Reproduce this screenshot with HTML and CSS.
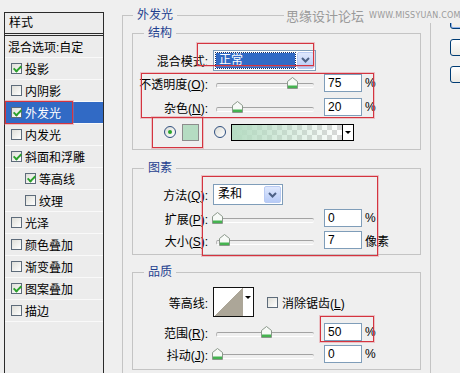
FILE: index.html
```html
<!DOCTYPE html>
<html>
<head>
    <meta charset="utf-8">
    <title>图层样式 - 外发光</title>
    <link rel="stylesheet" href="styles.css">
</head>
<body>
    <div class="dialog">
        <div class="style-list">
            <div class="list-title">样式</div>
            <div class="list-row plain">混合选项:自定</div>
            <div class="list-row"><span class="check on"></span>投影</div>
            <div class="list-row"><span class="check"></span>内阴影</div>
            <div class="list-row selected"><span class="check on"></span>外发光</div>
            <div class="list-row"><span class="check"></span>内发光</div>
            <div class="list-row"><span class="check on"></span>斜面和浮雕</div>
            <div class="list-row sub"><span class="check on"></span>等高线</div>
            <div class="list-row sub"><span class="check"></span>纹理</div>
            <div class="list-row"><span class="check"></span>光泽</div>
            <div class="list-row"><span class="check"></span>颜色叠加</div>
            <div class="list-row"><span class="check"></span>渐变叠加</div>
            <div class="list-row"><span class="check on"></span>图案叠加</div>
            <div class="list-row"><span class="check"></span>描边</div>
        </div>

        <div class="main">
            <fieldset class="group outer">
                <legend>外发光</legend>

                <fieldset class="group inner structure">
                    <legend>结构</legend>
                    <div class="row blend-row">
                        <span class="label">混合模式:</span>
                        <div class="combo wide">
                            <span class="combo-value active">正常</span>
                            <span class="combo-btn"><svg width="9" height="6" viewBox="0 0 9 6"><path d="M1 1 L4.5 4.5 L8 1" fill="none" stroke="#4d6185" stroke-width="2"/></svg></span>
                        </div>
                    </div>
                    <div class="row opacity-row">
                        <span class="label">不透明度(<u>O</u>):</span>
                        <div class="slider"><span class="thumb" style="left: 75px"><svg width="11" height="12" viewBox="0 0 11 12"><path d="M0.5 4.5 L5.5 0.5 L10.5 4.5 V11.5 H0.5 Z" fill="#f7faf7" stroke="#8a988a"/><rect x="1" y="8.5" width="9" height="2.5" fill="#45b350"/></svg></span></div>
                        <input class="num" type="text" value="75">
                        <span class="unit">%</span>
                    </div>
                    <div class="row noise-row">
                        <span class="label">杂色(<u>N</u>):</span>
                        <div class="slider"><span class="thumb" style="left: 20px"><svg width="11" height="12" viewBox="0 0 11 12"><path d="M0.5 4.5 L5.5 0.5 L10.5 4.5 V11.5 H0.5 Z" fill="#f7faf7" stroke="#8a988a"/><rect x="1" y="8.5" width="9" height="2.5" fill="#45b350"/></svg></span></div>
                        <input class="num" type="text" value="20">
                        <span class="unit">%</span>
                    </div>
                    <div class="row color-row">
                        <span class="radio on"></span>
                        <span class="swatch"></span>
                        <span class="radio second"></span>
                        <div class="grad-box">
                            <span class="grad-fill"></span>
                            <span class="grad-arrow"><i class="tri"></i></span>
                        </div>
                    </div>
                </fieldset>

                <fieldset class="group inner elements">
                    <legend>图素</legend>
                    <div class="row method-row">
                        <span class="label">方法(<u>Q</u>):</span>
                        <div class="combo narrow">
                            <span class="combo-value">柔和</span>
                            <span class="combo-btn"><svg width="9" height="6" viewBox="0 0 9 6"><path d="M1 1 L4.5 4.5 L8 1" fill="none" stroke="#4d6185" stroke-width="2"/></svg></span>
                        </div>
                    </div>
                    <div class="row spread-row">
                        <span class="label">扩展(<u>P</u>):</span>
                        <div class="slider"><span class="thumb" style="left: 0px"><svg width="11" height="12" viewBox="0 0 11 12"><path d="M0.5 4.5 L5.5 0.5 L10.5 4.5 V11.5 H0.5 Z" fill="#f7faf7" stroke="#8a988a"/><rect x="1" y="8.5" width="9" height="2.5" fill="#45b350"/></svg></span></div>
                        <input class="num" type="text" value="0">
                        <span class="unit">%</span>
                    </div>
                    <div class="row size-row">
                        <span class="label">大小(<u>S</u>):</span>
                        <div class="slider"><span class="thumb" style="left: 7px"><svg width="11" height="12" viewBox="0 0 11 12"><path d="M0.5 4.5 L5.5 0.5 L10.5 4.5 V11.5 H0.5 Z" fill="#f7faf7" stroke="#8a988a"/><rect x="1" y="8.5" width="9" height="2.5" fill="#45b350"/></svg></span></div>
                        <input class="num" type="text" value="7">
                        <span class="unit">像素</span>
                    </div>
                </fieldset>

                <fieldset class="group inner">
                    <legend>品质</legend>
                    <div class="row contour-row">
                        <span class="label">等高线:</span>
                        <div class="contour">
                            <span class="contour-curve"></span>
                            <span class="contour-arrow"><i class="tri"></i></span>
                        </div>
                        <span class="check aa"></span>
                        <span class="aa-text">消除锯齿(<u>L</u>)</span>
                    </div>
                    <div class="row range-row">
                        <span class="label">范围(<u>R</u>):</span>
                        <div class="slider"><span class="thumb" style="left: 49px"><svg width="11" height="12" viewBox="0 0 11 12"><path d="M0.5 4.5 L5.5 0.5 L10.5 4.5 V11.5 H0.5 Z" fill="#f7faf7" stroke="#8a988a"/><rect x="1" y="8.5" width="9" height="2.5" fill="#45b350"/></svg></span></div>
                        <input class="num" type="text" value="50">
                        <span class="unit">%</span>
                    </div>
                    <div class="row jitter-row">
                        <span class="label">抖动(<u>J</u>):</span>
                        <div class="slider"><span class="thumb" style="left: 0px"><svg width="11" height="12" viewBox="0 0 11 12"><path d="M0.5 4.5 L5.5 0.5 L10.5 4.5 V11.5 H0.5 Z" fill="#f7faf7" stroke="#8a988a"/><rect x="1" y="8.5" width="9" height="2.5" fill="#45b350"/></svg></span></div>
                        <input class="num" type="text" value="0">
                        <span class="unit">%</span>
                    </div>
                </fieldset>
            </fieldset>
        </div>

        <!-- dialog buttons, only their left edge is inside the window -->
        <div class="buttons">
            <button class="btn default" aria-label="确定"></button>
            <button class="btn" aria-label="取消"></button>
            <button class="btn" aria-label="新建样式"></button>
        </div>
    </div>

    <!-- watermark and red annotation boxes drawn over the dialog -->
    <div class="watermark"><span class="wm-cn">思缘设计论坛</span><span class="wm-en">WWW.MISSYUAN.COM</span></div>
    <div class="mark mark-list"></div>
    <div class="mark mark-blend"></div>
    <div class="mark mark-opacity"></div>
    <div class="mark mark-color"></div>
    <div class="mark mark-elements"></div>
    <div class="mark mark-range"></div>
</body>
</html>
```

FILE: styles.css
```css
* {
    box-sizing: border-box;
}

html, body {
    margin: 0;
    height: 373px;
    overflow: hidden;
}

body {
    background-color: #efefef;
    color: #000;
    font-family: "Liberation Sans", "Noto Sans CJK SC", sans-serif;
    font-size: 12px;
    position: relative;
}

.dialog {
    display: flex;
    align-items: flex-start;
}

/* left style list */
.style-list {
    width: 100px;
    height: 380px;
    margin: 12px 0 0 4px;
    border: 1px solid #2b2b2b;
    background-color: #ececec;
    flex-shrink: 0;
}

.list-title {
    height: 23px;
    line-height: 20px;
    padding-left: 4px;
    border-bottom: 3px double #2b2b2b;
}

.list-row {
    height: 22px;
    display: flex;
    align-items: center;
    gap: 3px;
    padding-left: 6px;
    border-bottom: 1px solid #f9f9f9;
    white-space: nowrap;
}
.list-row.plain {
    padding-left: 3px;
}
.list-row.sub {
    padding-left: 20px;
}
.list-row.selected {
    background-color: #316ac5;
    color: #fff;
}

.check {
    width: 11px;
    height: 11px;
    border: 1px solid #5d6b7a;
    background: linear-gradient(135deg, #deded8, #fff);
    position: relative;
    flex-shrink: 0;
}
.check.on::after {
    content: "";
    position: absolute;
    left: 3px;
    top: 0px;
    width: 3px;
    height: 6px;
    border: solid #2ba12b;
    border-width: 0 2px 2px 0;
    transform: rotate(45deg);
}

/* main area */
.main {
    width: 309px;
    margin-left: 18px;
    padding-top: 7px;
    flex-shrink: 0;
}

.group {
    margin: 0;
    border: 1px solid #c4c4c4;
    min-width: 0;
}
.group legend {
    padding: 0 4px;
    line-height: 16px;
    color: #1f3f8f;
}
.group.outer {
    height: 380px;
    padding: 2px 9px 0;
}
.group.outer > legend {
    margin-left: 1px;
}
.group.inner {
    margin-bottom: 10px;
    padding: 0 0 6px;
}
.group.inner.structure {
    padding-bottom: 8px;
}
.group.inner.elements {
    margin-bottom: 9px;
    padding-bottom: 5px;
}
.group.inner > legend {
    margin-left: 11px;
}

.row {
    display: flex;
    align-items: center;
    height: 18px;
    white-space: nowrap;
}
.label {
    width: 75px;
    margin-right: 5px;
    text-align: right;
    flex-shrink: 0;
}

.blend-row { height: 22px; margin-top: 8px; }
.opacity-row { margin-top: 3px; }
.noise-row { margin-top: 6px; }
.color-row { margin-top: 7px; padding-left: 31px; }
.method-row { height: 21px; margin-top: 8px; }
.spread-row { margin-top: 4px; }
.size-row { margin-top: 4px; }
.contour-row { height: 30px; margin-top: 7px; }
.range-row { margin-top: 6px; }
.jitter-row { margin-top: 4px; }

/* combo boxes */
.combo {
    height: 21px;
    border: 1px solid #7f9db9;
    background-color: #fff;
    display: flex;
    padding: 1px;
}
.combo.wide { width: 103px; }
.combo.narrow { width: 70px; }
.combo-value {
    flex: 1;
    padding-left: 3px;
    line-height: 17px;
}
.combo-value.active {
    margin: 1px 2px 1px 1px;
    line-height: 15px;
    background-color: #316ac5;
    color: #fff;
    outline: 1px dotted #1a2f60;
}
.combo-btn {
    width: 17px;
    border-radius: 2px;
    border: 1px solid #b9cbf3;
    background: linear-gradient(#dfe8fd, #b7cbf7);
    display: flex;
    align-items: center;
    justify-content: center;
}

/* sliders */
.slider {
    position: relative;
    width: 106px;
    height: 18px;
    margin-left: -1px;
    flex-shrink: 0;
}
.slider::before {
    content: "";
    position: absolute;
    left: 4px;
    right: 4px;
    top: 9px;
    height: 3px;
    border-radius: 2px;
    border-top: 1px solid #a3a3a3;
    border-left: 1px solid #b8b8b8;
    border-bottom: 1px solid #fff;
}
.thumb {
    position: absolute;
    top: 3px;
    width: 11px;
    height: 12px;
}
.thumb svg {
    display: block;
}

.num {
    width: 38px;
    height: 18px;
    margin: 0 0 0 6px;
    padding: 0 0 0 3px;
    border: 1px solid #7f9db9;
    background-color: #fff;
    font-family: "Liberation Sans", sans-serif;
    font-size: 12px;
    color: #000;
}
.unit {
    margin-left: 3px;
}

/* colour choice */
.radio {
    width: 12px;
    height: 12px;
    border-radius: 50%;
    border: 1px solid #2f4f7f;
    background: linear-gradient(135deg, #dcdcd6, #fff);
    position: relative;
    flex-shrink: 0;
}
.radio.on::after {
    content: "";
    position: absolute;
    left: 3px;
    top: 3px;
    width: 4px;
    height: 4px;
    border-radius: 50%;
    background-color: #2aa52a;
}
.radio.second {
    margin-left: 15px;
}
.swatch {
    width: 17px;
    height: 17px;
    margin-left: 6px;
    border: 1px solid #8c8c8c;
    background-color: #b5dcc2;
}
.grad-box {
    width: 123px;
    height: 17px;
    margin-left: 5px;
    border: 1px solid #000;
    display: flex;
}
.grad-fill {
    flex: 1;
    background:
        linear-gradient(to right, #b5dcc2, rgba(181, 220, 194, 0)),
        conic-gradient(#d8d8d8 25%, #fff 0 50%, #d8d8d8 0 75%, #fff 0) 0 0 / 10px 10px;
}
.grad-arrow {
    width: 11px;
    border-left: 1px solid #000;
    background-color: #fff;
    display: flex;
    align-items: center;
    justify-content: center;
}
.tri {
    display: block;
    width: 0;
    height: 0;
    border-left: 3px solid transparent;
    border-right: 3px solid transparent;
    border-top: 3px solid #000;
}

/* contour */
.contour {
    width: 41px;
    height: 30px;
    border: 1px solid #111;
    display: flex;
}
.contour-curve {
    flex: 1;
    background: linear-gradient(to bottom right, #fff 50%, #aca698 50%);
}
.contour-arrow {
    width: 10px;
    background-color: #fff;
    display: flex;
    align-items: flex-start;
    justify-content: center;
    padding-top: 8px;
}
.check.aa {
    margin-left: 13px;
}
.aa-text {
    margin-left: 4px;
}

/* right buttons */
.buttons {
    margin-left: 19px;
    padding-top: 12px;
    display: flex;
    flex-direction: column;
    gap: 10px;
    flex-shrink: 0;
}
.btn {
    width: 80px;
    height: 17px;
    padding: 0;
    border: 1px solid #003c74;
    border-radius: 3px;
    background: linear-gradient(#fff, #eceae4);
}
.btn.default {
    box-shadow: inset 0 0 0 1px #8fb2ec;
}

/* watermark */
.watermark {
    position: absolute;
    left: 284px;
    top: 7px;
    padding: 0 2px;
    background-color: #efefef;
    color: #9a9a9a;
    white-space: nowrap;
    display: flex;
    align-items: center;
    height: 16px;
}
.wm-cn {
    font-size: 13px;
}
.wm-en {
    margin-left: 5px;
    font-family: "DejaVu Sans", sans-serif;
    font-size: 8px;
    letter-spacing: 0.2px;
}

/* red annotation boxes */
.mark {
    position: absolute;
    border: 1px solid #d4343f;
    box-shadow: 0 0 0 1px rgba(225, 110, 120, 0.35);
    pointer-events: none;
}
.mark-list { left: 5px; top: 101px; width: 68px; height: 23px; }
.mark-blend { left: 197px; top: 43px; width: 117px; height: 23px; }
.mark-opacity { left: 141px; top: 73px; width: 233px; height: 45px; }
.mark-color { left: 152px; top: 117px; width: 51px; height: 31px; }
.mark-elements { left: 202px; top: 176px; width: 176px; height: 80px; }
.mark-range { left: 320px; top: 316px; width: 54px; height: 26px; }
```
